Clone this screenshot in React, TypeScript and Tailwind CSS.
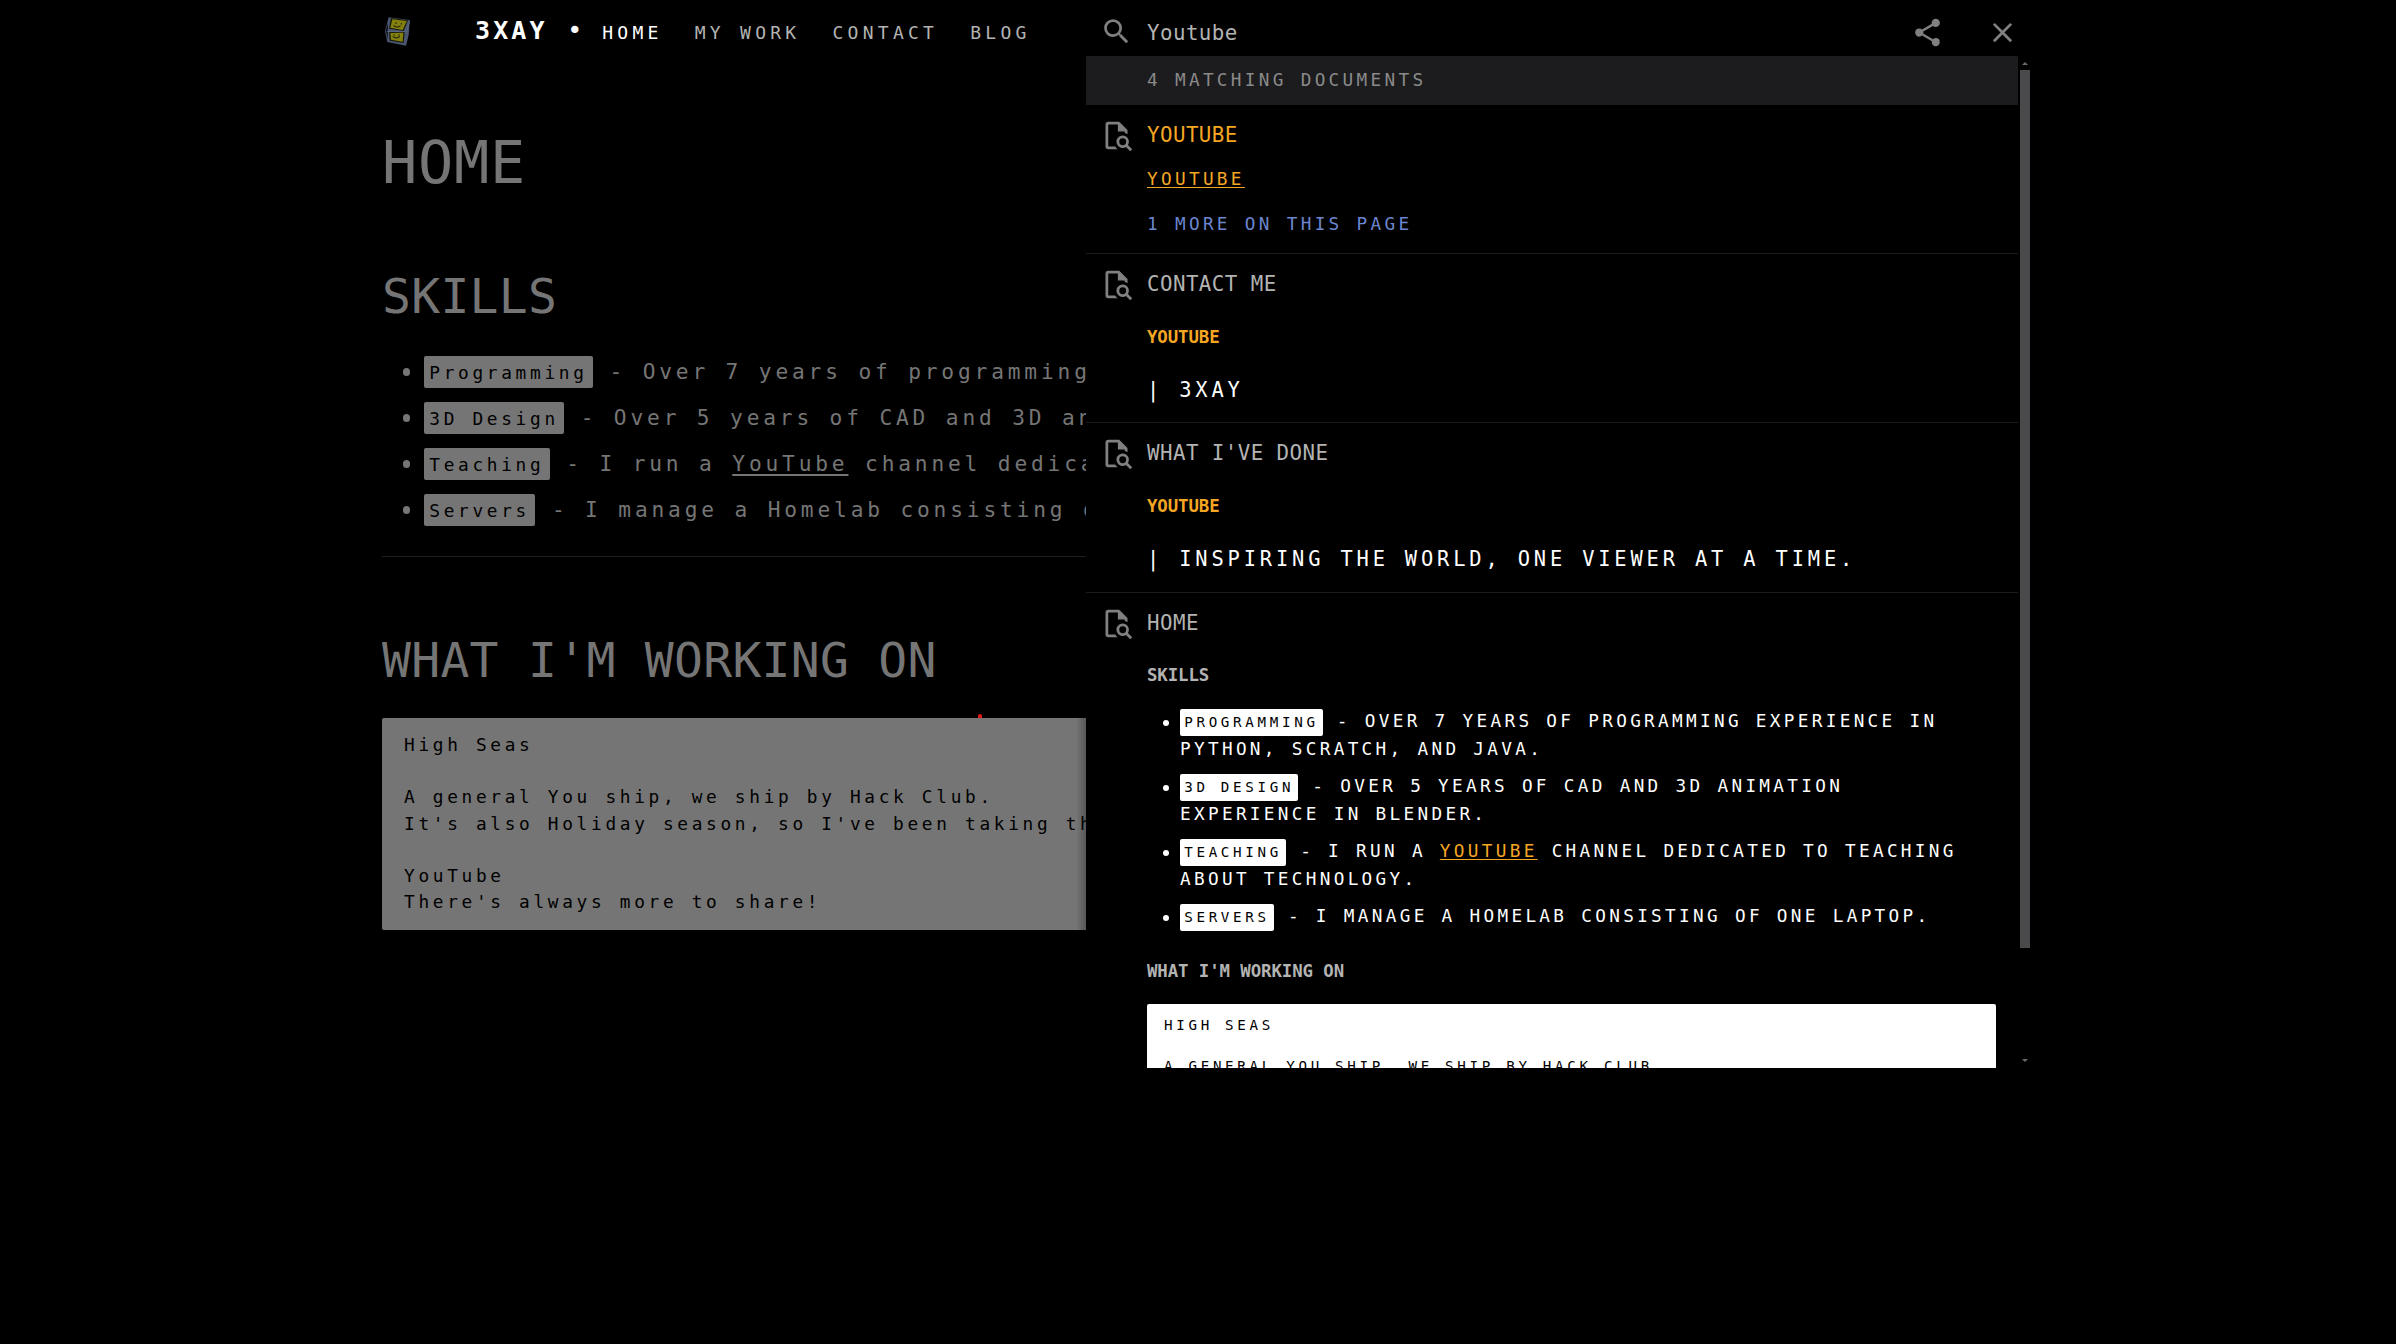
import type { ReactNode } from 'react';

const PATHS = {
  search:
    'M9.5 3A6.5 6.5 0 0 1 16 9.5c0 1.61-.59 3.09-1.56 4.23l.27.27h.79l5 5-1.5 1.5-5-5v-.79l-.27-.27A6.516 6.516 0 0 1 9.5 16 6.5 6.5 0 0 1 3 9.5 6.5 6.5 0 0 1 9.5 3m0 2C7 5 5 7 5 9.5S7 14 9.5 14 14 12 14 9.5 12 5 9.5 5Z',
  share:
    'M18 16.08c-.76 0-1.44.3-1.96.77L8.91 12.7c.05-.23.09-.46.09-.7 0-.24-.04-.47-.09-.7l7.05-4.11c.54.5 1.25.81 2.04.81a3 3 0 0 0 3-3 3 3 0 0 0-3-3 3 3 0 0 0-3 3c0 .24.04.47.09.7L8.04 9.81C7.5 9.31 6.79 9 6 9a3 3 0 0 0-3 3 3 3 0 0 0 3 3c.79 0 1.5-.31 2.04-.81l7.12 4.15c-.05.21-.08.43-.08.66 0 1.61 1.31 2.91 2.92 2.91 1.61 0 2.92-1.3 2.92-2.91A2.92 2.92 0 0 0 18 16.08Z',
  close:
    'M19 6.41 17.59 5 12 10.59 6.41 5 5 6.41 10.59 12 5 17.59 6.41 19 12 13.41 17.59 19 19 17.59 13.41 12 19 6.41Z',
  fileSearch:
    'M14 2H6a2 2 0 0 0-2 2v16a2 2 0 0 0 2 2h7c-.41-.25-.8-.56-1.14-.9-.33-.33-.61-.7-.86-1.1H6V4h7v5h5v1.18c.71.16 1.39.43 2 .82V8l-6-6m6.31 16.9c1.33-2.11.69-4.9-1.4-6.22-2.11-1.33-4.91-.68-6.22 1.4-1.34 2.11-.69 4.89 1.4 6.22 1.46.93 3.32.93 4.79.02L22 23.39 23.39 22l-3.08-3.1m-3.81.1a2.5 2.5 0 0 1-2.5-2.5 2.5 2.5 0 0 1 2.5-2.5 2.5 2.5 0 0 1 2.5 2.5 2.5 2.5 0 0 1-2.5 2.5Z',
};

function Icon({ name, className = '' }: { name: keyof typeof PATHS; className?: string }) {
  return (
    <svg viewBox="0 0 24 24" fill="currentColor" className={`size-[33px] shrink-0 text-[#808080] ${className}`}>
      <path d={PATHS[name]} />
    </svg>
  );
}

function Logo() {
  return (
    <svg viewBox="0 0 144 132" className="-ml-[6px] mt-[10px] h-[44px] w-[48px] shrink-0">
      <path d="M38 22 101 30 98 75 90 107 34 96 27 62Z" fill="#4b5670" />
      <path d="M36 38 29 60 35 88Z" fill="#10131c" />
      <path d="M45 24 96 31 83 63 39 56Z" fill="#191a08" />
      <path d="M49 28 92 33 80 60 43 53Z" fill="#85810f" />
      <path d="M39 66 86 66 83 99 41 92Z" fill="#191a08" />
      <path d="M43 69 82 68 80 95 45 89Z" fill="#85810f" />
      <g stroke="#15150a" strokeWidth="3" fill="none">
        <path d="M60 37v5M76 39v5M52 47q12 9 22 1M54 73v4M69 73v4M50 80q10 8 22 0" />
      </g>
      <path d="M33 64 92 65 101 34" stroke="#5a6686" strokeWidth="3" fill="none" />
    </svg>
  );
}

const NAV = ['HOME', 'MY WORK', 'CONTACT', 'BLOG'];

function PageSkill({ tag, children }: { tag: string; children: ReactNode }) {
  return (
    <li className="flex h-[46px] items-baseline whitespace-pre text-[21.2px] leading-[46px] tracking-[3.84px]">
      <span className="ml-[21px] mr-[14px] h-[8px] w-[7px] shrink-0 self-center rounded-full bg-[#757575]" />
      <code className="rounded-[2px] bg-[#757575] px-[5.3px] pt-[2px] font-[inherit] text-[17.8px] leading-[30px] tracking-[3.68px] text-black">
        {tag}
      </code>
      <span> {children}</span>
    </li>
  );
}

function Page() {
  return (
    <div className="relative h-[1068px] w-[704px] shrink-0 overflow-hidden text-[#757575]">
      <header className="flex h-[61px] items-start">
        <Logo />
        <div className="ml-[51px] flex items-baseline whitespace-pre">
          <span className="text-[25px] font-bold leading-[61px] tracking-[3.1px] text-white">3XAY </span>
          <span className="ml-[1.5px] w-[35px] text-[25px] leading-[61px] text-white">•</span>
          <nav className="flex gap-8 text-[18px] leading-[30px] tracking-[4.27px]">
            {NAV.map((n) => (
              <a key={n} className={n === 'HOME' ? 'text-white' : 'text-[#b3b3b3]'}>
                {n}
              </a>
            ))}
          </nav>
        </div>
      </header>
      <h1 className="mt-[73px] text-[58.6px] leading-[58px] tracking-[0.7px]">HOME</h1>
      <h2 className="mt-[80px] text-[48px] leading-[48px] tracking-[0.3px]">SKILLS</h2>
      <ul className="mt-[29px]">
        <PageSkill tag="Programming">- Over 7 years of programming</PageSkill>
        <PageSkill tag="3D Design">- Over 5 years of CAD and 3D an</PageSkill>
        <PageSkill tag="Teaching">
          - I run a{' '}
          <a className="underline decoration-2 underline-offset-[3px]">YouTube</a> channel dedica
        </PageSkill>
        <PageSkill tag="Servers">- I manage a Homelab consisting o</PageSkill>
      </ul>
      <div className="mt-[23px] h-px bg-[#1e1e1e]" />
      <h2 className="mt-[79px] whitespace-pre text-[48px] leading-[48px] tracking-[0.3px]">WHAT I'M WORKING ON</h2>
      <div className="relative mt-[34px]">
        <pre className="h-[212px] rounded-l-[2px] bg-[#757575] pl-[22px] pt-[14px] font-[inherit] text-[17.8px] leading-[26.2px] tracking-[3.68px] text-black">
          {"High Seas\n\nA general You ship, we ship by Hack Club.\nIt's also Holiday season, so I've been taking th\n\nYouTube\nThere's always more to share!"}
        </pre>
        <span className="absolute -top-[4px] left-[596px] h-[4px] w-[4px] rounded-t-full bg-[#e01818]" />
        <div className="absolute inset-y-0 right-0 w-[10px] bg-linear-to-r from-transparent to-black/25" />
      </div>
    </div>
  );
}

function Result({ title, hit, className, children }: { title: string; hit?: boolean; className: string; children: ReactNode }) {
  return (
    <article className={`flex shrink-0 items-start pl-[14px] ${className}`}>
      <Icon name="fileSearch" className="mt-[14px]" />
      <div className="ml-[14px] whitespace-pre">
        <h3
          className={`mt-[15px] text-[20.8px] leading-[30px] tracking-[0.44px] ${hit ? 'text-[#f5a623]' : 'text-[#b3b3b3]'}`}
        >
          {title}
        </h3>
        {children}
      </div>
    </article>
  );
}

function Heading({ className, children }: { className: string; children: ReactNode }) {
  return <h4 className={`text-[17.4px] font-bold leading-[28px] tracking-[-0.1px] ${className}`}>{children}</h4>;
}

function Quote({ children }: { children: ReactNode }) {
  return <p className="mt-[23px] text-[20.4px] leading-[32px] tracking-[3.84px] text-white">{children}</p>;
}

function Skill({ tag, children }: { tag: string; children: ReactNode }) {
  return (
    <li className="flex items-start text-[17.7px] leading-[28px] tracking-[3.32px] text-white">
      <span className="ml-[16px] mr-[11.5px] mt-[13px] size-[5.5px] shrink-0 rounded-full bg-white" />
      <span>
        <code className="-my-1 inline-block rounded-[2px] bg-white px-[4.2px] font-[inherit] text-[14.2px] leading-[27px] tracking-[3.68px] text-black">
          {tag}
        </code>{' '}
        {children}
      </span>
    </li>
  );
}

function SearchPanel() {
  return (
    <aside className="flex h-[1068px] w-[946px] shrink-0 flex-col overflow-hidden bg-black">
      <div className="flex h-[56px] shrink-0 items-start pl-[14px] pr-[13px] pt-[15px]">
        <Icon name="search" />
        <span className="ml-[14px] flex-1 text-[20.8px] leading-[36px] tracking-[0.44px] text-[#b3b3b3]">Youtube</span>
        <Icon name="share" className="mt-px" />
        <Icon name="close" className="ml-[42px] mt-px" />
      </div>
      <div className="flex h-[1012px]">
        <div className="flex w-[932px] shrink-0 flex-col overflow-hidden">
          <div className="h-[49px] shrink-0 bg-[#1c1c1e] pl-[61px] text-[17.7px] leading-[49px] tracking-[3.32px] text-[#8a8a8a]">
            4 MATCHING DOCUMENTS
          </div>
          <Result title="YOUTUBE" hit className="h-[149px] border-b border-[#1c1c1e]">
            <p className="mt-[15px] text-[17.7px] leading-[28px] tracking-[3.32px] text-[#f5a623]">
              <a className="underline decoration-1 underline-offset-2">YOUTUBE</a>
            </p>
            <p className="mt-[17px] text-[17.7px] leading-[28px] tracking-[3.32px] text-[#6b86cf]">1 MORE ON THIS PAGE</p>
          </Result>
          <Result title="CONTACT ME" className="h-[169px] border-b border-[#1c1c1e]">
            <Heading className="mt-[24px] text-[#f5a623]">YOUTUBE</Heading>
            <Quote>| 3XAY</Quote>
          </Result>
          <Result title="WHAT I'VE DONE" className="h-[170px] border-b border-[#1c1c1e]">
            <Heading className="mt-[24px] text-[#f5a623]">YOUTUBE</Heading>
            <Quote>| INSPIRING THE WORLD, ONE VIEWER AT A TIME.</Quote>
          </Result>
          <Result title="HOME" className="">
            <Heading className="mt-[23px] text-[#b3b3b3]">SKILLS</Heading>
            <ul className="mt-[18px] flex flex-col gap-[9px]">
              <Skill tag="PROGRAMMING">
                - OVER 7 YEARS OF PROGRAMMING EXPERIENCE IN
                <br />
                PYTHON, SCRATCH, AND JAVA.
              </Skill>
              <Skill tag="3D DESIGN">
                - OVER 5 YEARS OF CAD AND 3D ANIMATION
                <br />
                EXPERIENCE IN BLENDER.
              </Skill>
              <Skill tag="TEACHING">
                - I RUN A{' '}
                <a className="text-[#f5a623] underline decoration-1 underline-offset-2">YOUTUBE</a> CHANNEL DEDICATED TO
                TEACHING
                <br />
                ABOUT TECHNOLOGY.
              </Skill>
              <Skill tag="SERVERS">- I MANAGE A HOMELAB CONSISTING OF ONE LAPTOP.</Skill>
            </ul>
            <Heading className="mt-[27px] text-[#b3b3b3]">WHAT I'M WORKING ON</Heading>
            <pre className="mt-[19px] h-[212px] w-[849px] rounded-[2px] bg-white pl-[17px] pt-[11px] font-[inherit] text-[14.2px] leading-[20.7px] tracking-[3.68px] text-black">
              {'HIGH SEAS\n\nA GENERAL YOU SHIP, WE SHIP BY HACK CLUB.'}
            </pre>
          </Result>
        </div>
        <div className="flex w-[14px] flex-col items-center pt-[6px]">
          <svg viewBox="0 0 6 3" className="h-[3px] w-[6px]">
            <path d="M0 3 3 0 6 3Z" fill="#6a6a6a" />
          </svg>
          <div className="mt-[5px] h-[878px] w-[10px] shrink-0 bg-[#4a4a4c]" />
          <svg viewBox="0 0 6 3" className="mt-[111px] h-[3px] w-[6px]">
            <path d="M0 0 3 3 6 0Z" fill="#6a6a6a" />
          </svg>
        </div>
      </div>
    </aside>
  );
}

export default function App() {
  return (
    <main className="flex h-[1344px] w-full items-start overflow-hidden bg-black pl-[382px] font-['DejaVu_Sans_Mono',monospace]">
      <Page />
      <SearchPanel />
    </main>
  );
}
